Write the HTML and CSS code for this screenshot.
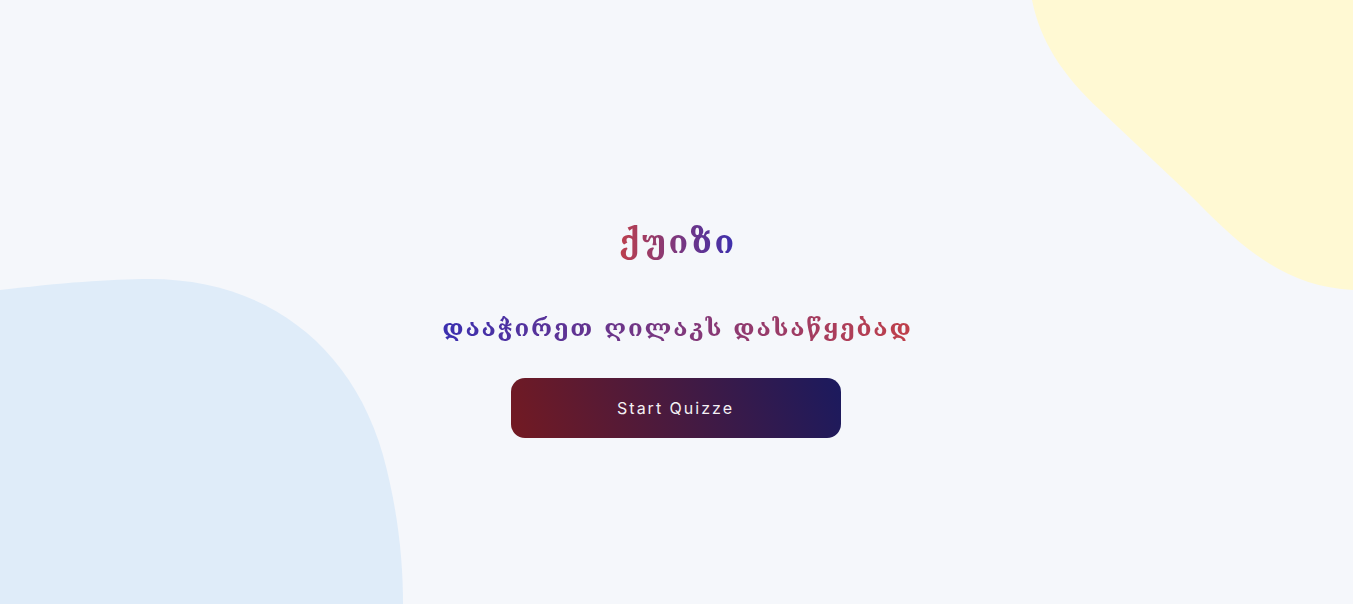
FILE: index.html
```html
<!DOCTYPE html>
<html lang="ka">
<head>
<meta charset="utf-8">
<title>ქუიზი</title>
<link rel="stylesheet" href="styles.css">
</head>
<body>
<svg class="blobs" width="1353" height="604" viewBox="0 0 1353 604" aria-hidden="true">
  <path class="blob-yellow" d="M1032,0 C1040,40 1062,75 1100,110 L1190,195 C1235,240 1280,287 1353,290 L1353,0 Z"/>
  <path class="blob-blue" d="M0,290 C60,283 110,279 150,279 C260,279 350,340 383,455 C398,510 403,560 403,604 L0,604 Z"/>
</svg>
<main class="start">
  <h1 class="title">ქუიზი</h1>
  <p class="subtitle">დააჭირეთ ღილაკს დასაწყებად</p>
  <button class="start-btn" type="button">Start Quizze</button>
</main>
</body>
</html>
```
FILE: styles.css
```css
html, body {
  margin: 0;
  padding: 0;
}
body {
  background: #f5f7fb;
  min-height: 100vh;
  overflow: hidden;
  position: relative;
  font-family: "DejaVu Serif", serif;
}
.blobs {
  position: absolute;
  left: 0;
  top: 0;
  z-index: 0;
}
.blob-yellow { fill: #fff9d3; }
.blob-blue { fill: #dfecf9; }
.start {
  position: relative;
  z-index: 1;
  display: flex;
  flex-direction: column;
  align-items: center;
  padding-top: 222px;
}
.title {
  margin: 0;
  font-size: 32px;
  line-height: 40px;
  font-weight: bold;
  letter-spacing: 2.5px;
  padding-left: 2.5px;
  background: linear-gradient(90deg, #c0404a, #3a2fb0);
  -webkit-background-clip: text;
  background-clip: text;
  color: transparent;
}
.subtitle {
  margin: 50px 0 0;
  font-size: 24px;
  line-height: 32px;
  font-weight: bold;
  letter-spacing: 1.8px;
  padding-left: 1.8px;
  background: linear-gradient(90deg, #3a2fb0, #c0404a);
  -webkit-background-clip: text;
  background-clip: text;
  color: transparent;
}
.start-btn {
  margin-top: 34px;
  margin-right: 2px;
  width: 330px;
  height: 60px;
  border: none;
  border-radius: 14px;
  background: linear-gradient(70deg, #731a22, #1b1a5e);
  color: #f4f0f4;
  font-family: Inter, "Liberation Sans", sans-serif;
  font-size: 16px;
  letter-spacing: 2px;
  cursor: pointer;
}
```
